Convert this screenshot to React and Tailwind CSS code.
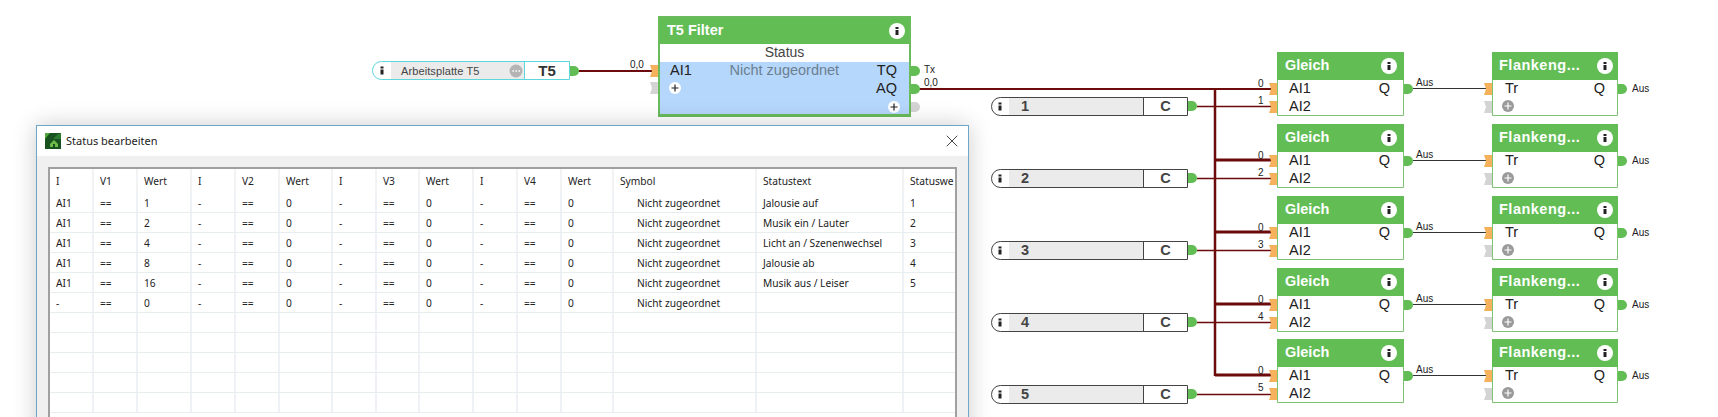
import { X } from "lucide-react";

const columns = ["I", "V1", "Wert", "I", "V2", "Wert", "I", "V3", "Wert", "I", "V4", "Wert", "Symbol", "Statustext", "Statuswe"];

const rows = [
  ["AI1", "1", "Jalousie auf", "1"],
  ["AI1", "2", "Musik ein / Lauter", "2"],
  ["AI1", "4", "Licht an / Szenenwechsel", "3"],
  ["AI1", "8", "Jalousie ab", "4"],
  ["AI1", "16", "Musik aus / Leiser", "5"],
  ["-", "0", "", ""],
];

const gridCols = "grid grid-cols-[44px_44px_54px_44px_44px_53px_44px_43px_54px_44px_44px_52px_143px_147px_51px]";

const rowTops = [52, 124, 196, 268, 339];
const constTops = [97, 169, 241, 313, 385];

const InfoDot = ({ x, y, r = 8 }) => (
  <g>
    <circle cx={x} cy={y} r={r} fill="#fff" />
    <rect x={x - 1.5} y={y - 1} width="3" height="5" fill="#222" />
    <rect x={x - 1.5} y={y - 4} width="3" height="2" fill="#222" />
  </g>
);

const InPort = ({ x, y, color = "#f6b15c" }) => (
  <polygon points={`${x},${y - 6} ${x + 8},${y - 6} ${x + 8},${y + 6} ${x},${y + 6} ${x + 2},${y}`} fill={color} />
);

const OutPort = ({ x, y, color = "#62bd55" }) => (
  <path d={`M${x} ${y - 5}h4a5 5 0 0 1 0 10h-4z`} fill={color} />
);

const Plus = ({ x, y, bg = "#fff", fg = "#222" }) => (
  <g>
    <circle cx={x} cy={y} r="6" fill={bg} />
    <path d={`M${x - 3.5} ${y}h7M${x} ${y - 3.5}v7`} stroke={fg} strokeWidth="1.2" />
  </g>
);

const Label = ({ x, y, className = "", children }) => (
  <div className={`absolute leading-none whitespace-nowrap ${className}`} style={{ left: x, top: y }}>
    {children}
  </div>
);

// Wires and ports of the function diagram
const Wires = () => (
  <svg className="absolute left-0 top-0" width="1718" height="417">
    <path d="M578 71H654" stroke="#6b0b0b" strokeWidth="2" fill="none" />
    <path d="M919 89H1272" stroke="#6b0b0b" strokeWidth="2" fill="none" />
    <path d="M1215 89V376" stroke="#6b0b0b" strokeWidth="2.5" fill="none" />
    {rowTops.map((top, i) => (
      <g key={top}>
        {i > 0 && <path d={`M1215 ${top + 36}H1272`} stroke="#6b0b0b" strokeWidth="3" fill="none" />}
        <path d={`M1197 ${constTops[i] + 9.5}H1272`} stroke="#6b0b0b" strokeWidth="1.5" fill="none" />
        <path d={`M1413 ${top + 36.5}H1486`} stroke="#333" strokeWidth="1" fill="none" />
        <InPort x={1269} y={top + 37} />
        <InPort x={1269} y={top + 55} />
        <OutPort x={1404} y={top + 37} />
        <InPort x={1484} y={top + 37} />
        <InPort x={1484} y={top + 55} color="#d4d4d4" />
        <OutPort x={1618} y={top + 37} />
        <OutPort x={1188} y={constTops[i] + 9} />
      </g>
    ))}
    <InPort x={650} y={71} />
    <InPort x={650} y={88} color="#d4d4d4" />
    <OutPort x={570} y={71} />
    <OutPort x={911} y={71} />
    <OutPort x={911} y={89} />
    <OutPort x={911} y={107} color="#d4d4d4" />
  </svg>
);

const FilterBlock = () => (
  <div className="absolute left-[658px] top-[16px] w-[253px] h-[101px] border-2 border-b-[3px] border-[#6abb5c] flex flex-col bg-[#b5d7fb] font-['Liberation_Sans',sans-serif] text-[14.5px] text-[#222]">
    <div className="h-[26px] bg-[#62bd55] flex items-center px-[7px] font-bold text-white">T5 Filter</div>
    <div className="h-[18px] bg-white text-center leading-[17px] text-[14px] text-[#444]">Status</div>
    <div className="flex justify-between pl-[10px] pr-[12px] leading-[17px]">
      <span>AI1</span>
      <span className="text-[#6d7f91]">Nicht zugeordnet</span>
      <span>TQ</span>
    </div>
    <div className="text-right pr-[12px] leading-[19px]">AQ</div>
  </div>
);

const GleichBlock = ({ top }) => (
  <div
    className="absolute left-[1277px] w-[127px] h-[64px] border border-[#7dc471] rounded-t-[2px] bg-white flex flex-col font-['Liberation_Sans',sans-serif] text-[14.5px] text-[#222]"
    style={{ top }}
  >
    <div className="h-[28px] shrink-0 bg-[#62bd55] -mx-px -mt-px flex items-center px-[8px] font-bold text-white">Gleich</div>
    <div className="flex justify-between pl-[11px] pr-[13px] h-[17px] leading-[16px]">
      <span>AI1</span>
      <span>Q</span>
    </div>
    <div className="pl-[11px] h-[18px] leading-[18px]">AI2</div>
  </div>
);

const FlankenBlock = ({ top }) => (
  <div
    className="absolute left-[1492px] w-[126px] h-[64px] border border-[#7dc471] rounded-t-[2px] bg-white flex flex-col font-['Liberation_Sans',sans-serif] text-[14.5px] text-[#222]"
    style={{ top }}
  >
    <div className="h-[28px] shrink-0 bg-[#62bd55] -mx-px -mt-px flex items-center px-[7px] font-bold text-white tracking-[0.5px]">Flankeng...</div>
    <div className="flex justify-between pl-[12px] pr-[12px] h-[17px] leading-[16px]">
      <span>Tr</span>
      <span>Q</span>
    </div>
  </div>
);

const ConstBlock = ({ top, n }) => (
  <div
    className="absolute left-[991px] w-[197px] h-[19px] border border-[#444] rounded-l-[10px] bg-white flex font-['Liberation_Sans',sans-serif] font-bold text-[14.5px] text-[#444] leading-[17px]"
    style={{ top }}
  >
    <div className="w-[17px]" />
    <div className="w-[134px] bg-[#ebebeb] pl-[12px]">{n}</div>
    <div className="flex-1 border-l border-[#444] text-center">C</div>
  </div>
);

const InputBlock = () => (
  <div className="absolute left-[372px] top-[61px] w-[198px] h-[19px] border border-[#5fd6dc] rounded-l-[10px] bg-white flex font-['Liberation_Sans',sans-serif]">
    <div className="w-[18px]" />
    <div className="w-[133px] bg-[#ebebeb] pl-[10px] text-[11px] tracking-[0.1px] leading-[18px] text-[#444]">Arbeitsplatte T5</div>
    <div className="flex-1 border-l border-[#5fd6dc] text-center font-bold text-[15px] leading-[17px] text-[#333]">T5</div>
  </div>
);

const Icons = () => (
  <svg className="absolute left-0 top-0" width="1718" height="417">
    <InfoDot x={897} y={31} />
    <Plus x={675} y={88} />
    <Plus x={894} y={107} />
    {rowTops.map((top) => (
      <g key={top}>
        <InfoDot x={1389} y={top + 14} />
        <InfoDot x={1605} y={top + 14} />
        <Plus x={1508} y={top + 54} bg="#9a9a9a" fg="#fff" />
      </g>
    ))}
    <InfoDot x={382} y={70.5} r={0} />
    <circle cx="516" cy="71" r="6.5" fill="#b4b4b4" />
    <path d="M512.5 71h1.5M515.5 71h1.5M518.5 71h1.5" stroke="#fff" strokeWidth="1.4" />
    {constTops.map((top) => (
      <InfoDot key={top} x={1000} y={top + 9.5} r={0} />
    ))}
  </svg>
);

const StatusDialog = () => (
  <div className="absolute left-[36px] top-[125px] w-[933px] h-[320px] bg-[#f0f0f0] border border-[#6ea6c8] shadow-[0_0_22px_rgba(0,0,0,0.2)] font-['Noto_Sans',sans-serif] text-[10.2px] text-[#222]">
    <div className="h-[30px] bg-white flex items-center justify-between pl-[8px] pr-[6px]">
      <div className="flex items-center gap-[5px]">
        <svg width="16" height="16" viewBox="0 0 16 16">
          <rect width="16" height="16" fill="#17521f" />
          <path d="M0 0h5L0 6z" fill="#4fa83c" />
          <path d="M5 11l4-4 4 4v3H5z" fill="#6fbb4a" />
          <path d="M13 1L16 0v6L8 6z" fill="#2d7a31" />
          <rect x="8" y="11" width="2" height="3" fill="#17521f" />
        </svg>
        <span className="text-[11px]">Status bearbeiten</span>
      </div>
      <X size={20} strokeWidth={1} />
    </div>
    <div className="ml-[11px] mt-[11px] w-[909px] border-2 border-[#a0a0a0] border-b-0 bg-white h-[280px]">
      <div className={`${gridCols} h-[24px]`}>
        {columns.map((c, i) => (
          <div key={i} className="pl-[6px] leading-[25px] border-r-2 border-[#f2f3f5] last:border-r-0 overflow-hidden whitespace-nowrap">
            {c}
          </div>
        ))}
      </div>
      {Array.from({ length: 11 }).map((_, r) => {
        const row = rows[r];
        return (
          <div key={r} className={`${gridCols} h-[20px] border-b border-[#e8edf0]`}>
            {columns.map((_, i) => {
              let text = "";
              if (row) {
                if (i === 0) text = row[0];
                else if (i === 2) text = row[1];
                else if (i === 3 || i === 6 || i === 9) text = "-";
                else if (i === 1 || i === 4 || i === 7 || i === 10) text = "==";
                else if (i === 5 || i === 8 || i === 11) text = "0";
                else if (i === 12) text = "Nicht zugeordnet";
                else if (i === 13) text = row[2];
                else if (i === 14) text = row[3];
              }
              return (
                <div
                  key={i}
                  className={`${i === 12 ? "pl-[23px]" : "pl-[6px]"} leading-[21px] border-r-2 border-[#eef1f5] last:border-r-0 overflow-hidden whitespace-nowrap`}
                >
                  {text}
                </div>
              );
            })}
          </div>
        );
      })}
    </div>
  </div>
);

export default function App() {
  return (
    <div className="relative w-[1718px] h-[417px] overflow-hidden bg-white">
      <Wires />
      <InputBlock />
      <FilterBlock />
      {rowTops.map((top) => (
        <GleichBlock key={top} top={top} />
      ))}
      {rowTops.map((top) => (
        <FlankenBlock key={top} top={top} />
      ))}
      {constTops.map((top, i) => (
        <ConstBlock key={top} top={top} n={i + 1} />
      ))}
      <Icons />
      <div className="font-['Liberation_Sans',sans-serif] text-[10px] text-[#222]">
        <Label x={630} y={60}>0,0</Label>
        <Label x={924} y={65}>Tx</Label>
        <Label x={924} y={78}>0,0</Label>
        {rowTops.map((top, i) => (
          <div key={top}>
            <Label x={1258} y={top + 27}>0</Label>
            <Label x={1258} y={top + 44}>{i + 1}</Label>
            <Label x={1416} y={top + 26}>Aus</Label>
            <Label x={1632} y={top + 32}>Aus</Label>
          </div>
        ))}
      </div>
      <StatusDialog />
    </div>
  );
}
